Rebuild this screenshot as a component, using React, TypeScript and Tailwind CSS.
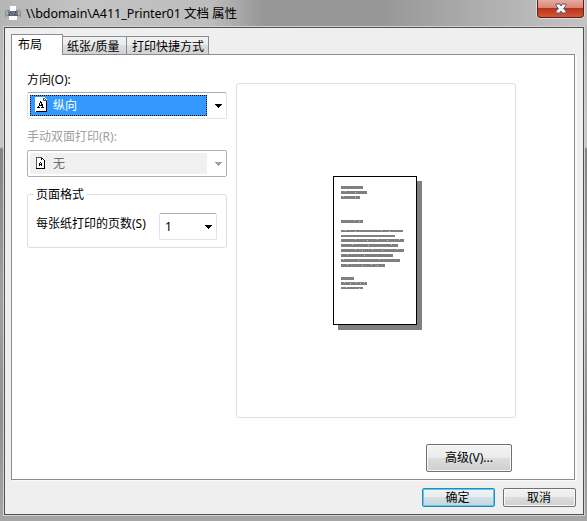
import type { ReactNode } from "react";

const previewLines = [
  { w: 22, h: 3, gap: 2, specks: [] },
  { w: 26, h: 3, gap: 2, specks: [4, 14] },
  { w: 19, h: 3, gap: 21, specks: [2, 14] },
  { w: 22, h: 3, gap: 7, specks: [13, 18] },
  { w: 62, h: 2, gap: 3, specks: [4, 14, 40, 48] },
  { w: 54, h: 2, gap: 2, specks: [] },
  { w: 63, h: 3, gap: 2, specks: [14, 26, 36, 46, 58] },
  { w: 57, h: 3, gap: 2, specks: [11, 27, 50] },
  { w: 63, h: 3, gap: 2, specks: [14, 21, 31, 41, 56] },
  { w: 52, h: 3, gap: 2, specks: [6, 23] },
  { w: 59, h: 3, gap: 2, specks: [2, 17, 38] },
  { w: 44, h: 3, gap: 10, specks: [6, 21, 30, 36] },
  { w: 13, h: 3, gap: 2, specks: [] },
  { w: 26, h: 3, gap: 2, specks: [3, 9, 15, 19, 23] },
  { w: 22, h: 2, gap: 0, specks: [5, 18] },
];

const PrinterIcon = () => (
  <svg width="16" height="15" viewBox="0 0 16 15" shapeRendering="crispEdges" className="shrink-0">
    <path d="M5 0h6v5H5z" fill="#fff" />
    <path d="M1 4h14v1H1zM0 5h16v6H0z" fill="#8b8f91" />
    <path d="M5 4h6v1H5z" fill="#fff" />
    <path d="M1 5h2v4H1zM13 5h2v4h-2z" fill="#a9adae" />
    <path d="M3 5h10v4H3z" fill="#74797c" />
    <path d="M3 5h2v1H3zM8 6h2v1H8zM6 8h1v1H6zM11 7h1v1h-1z" fill="#20a09b" />
    <path d="M5 6h1v1H5zM10 5h1v2h-1zM4 8h1v1H4zM9 8h1v1H9z" fill="#2945a0" />
    <path d="M6 7h2v1H6zM10 8h2v1h-2zM7 5h1v1H7z" fill="#a33c86" />
    <path d="M1 10h14v2H1z" fill="#b3b6b7" />
    <path d="M4 10h8v4H4z" fill="#fafafa" />
    <path d="M3 9h10v1H3z" fill="#666" />
  </svg>
);

const PageIcon = () => (
  <svg width="12" height="15" viewBox="0 0 12 15" shapeRendering="crispEdges" className="shrink-0">
    <path d="M0 0h9l3 3v12H0z" fill="#fff" />
    <path d="M11 4h1v11H1v-1h10z" fill="#000" />
    <path d="M8 1h1v2h3v1H8zM9 1h1v1H9zM10 2h1v1h-1z" fill="#555" />
    <path d="M5 4h1v1H5zM5 5h2v1H5zM4 6h1v2H4zM6 6h1v2H6zM7 7h1v2H7zM4 8h3v1H4zM3 9h1v1H3zM7 9h1v1H7zM2 10h3v1H2zM6 10h3v1H6z" fill="#000" />
  </svg>
);

const SmallPageIcon = () => (
  <svg width="9" height="12" viewBox="0 0 9 12" shapeRendering="crispEdges" className="shrink-0">
    <path d="M0 0h6l3 3v9H0z" fill="#fff" />
    <path d="M0 0h6v1H0zM0 0h1v12H0z" fill="#555" />
    <path d="M0 11h9v1H0zM8 3h1v9H8zM6 1h1v1H6zM7 2h1v1H7zM5 1h1v2H5z" fill="#000" />
    <path d="M4 5h1v1H4zM3 6h1v3H3zM5 6h1v3H5zM4 7h1v1H4z" fill="#000" />
  </svg>
);

const Arrow = ({ color }: { color: string }) => (
  <svg width="7" height="4" viewBox="0 0 7 4" shapeRendering="crispEdges" className="shrink-0">
    <path d="M0 0h7v1H0zM1 1h5v1H1zM2 2h3v1H2zM3 3h1v1H3z" fill={color} />
  </svg>
);

const Button = ({ children, className }: { children: ReactNode; className: string }) => (
  <button className={"flex items-center justify-center rounded-[2px] border text-xs leading-none " + className}>
    {children}
  </button>
);

export default function App() {
  return (
    <div className="flex h-[521px] w-[587px] flex-col overflow-hidden bg-[linear-gradient(#b4b4b4_0px,#c8c8c8_147px,#858585_149px,#a0a0a0_300px,#909090_420px,#a6a6a6_521px)] font-['Noto_Sans','Noto_Sans_CJK_SC',sans-serif] text-xs text-black">
      {/* title bar */}
      <div className="flex h-[26px] shrink-0 justify-between bg-[linear-gradient(90deg,#b5b5b5_0%,#c4c4c4_15%,#bcbcbc_36%,#969696_45%,#979797_65%,#aeaeae_82%,#c4c4c4_100%)] pl-[5px]">
        <div className="flex items-start gap-[5px] pt-[6px]">
          <PrinterIcon />
          <span className="text-[12.5px] leading-4 tracking-[-0.06px] whitespace-pre">{"\\\\bdomain\\A411_Printer01 文档 属性"}</span>
        </div>
        <button className="mr-[3px] flex h-[18px] w-[47px] items-center justify-center rounded-b-[4px] border border-t-0 border-[#5b2020] bg-[linear-gradient(#e8aaa0_0%,#d98477_48%,#bd3217_50%,#d2573c_100%)] shadow-[0_0_0_1px_#ddd]">
          <svg width="12" height="11" viewBox="0 0 12 11">
            <path d="M1 1h4l1 2 1-2h4v2L8.5 5.500 11 8v2H7L6 8l-1 2H1V8l2.500-2.500L1 3z" fill="#f4f4f4" stroke="#555a72" />
          </svg>
        </button>
      </div>

      {/* dialog body */}
      <div className="mt-px mr-[3px] ml-[4px] flex h-[488px] shrink-0 flex-col border border-[#505050] bg-[#efefef] px-[6px] pt-[6px] shadow-[0_0_0_1px_#d4d4d4]">
        <div className="z-10 flex h-5 shrink-0 items-end">
          <div className="-mb-px flex h-[21px] w-[52px] items-center border border-b-0 border-[#898c95] bg-white pl-[6px] leading-none">布局</div>
          <div className="flex h-[18px] w-[64px] items-center border border-b-0 border-l-0 border-[#898c95] bg-[linear-gradient(#f2f2f2_0%,#ebebeb_49%,#dddddd_50%,#d2d2d2_100%)] pt-[2px] pl-[4px] leading-none whitespace-nowrap">纸张/质量</div>
          <div className="flex h-[18px] w-[82px] items-center border border-b-0 border-l-0 border-[#898c95] bg-[linear-gradient(#f2f2f2_0%,#ebebeb_49%,#dddddd_50%,#d2d2d2_100%)] pt-[2px] pl-[5px] leading-none whitespace-nowrap">打印快捷方式</div>
        </div>

        <div className="flex h-[426px] w-[564px] shrink-0 flex-col border border-[#898c95] bg-white pt-[28px] pl-[15px] shadow-[2px_1px_0_#fafafa]">
          <div className="flex gap-[9px]">
            <div className="flex w-[200px] flex-col">
              <div className="-mt-[11px] h-5 leading-4">方向(O):</div>
              <div className="flex h-[27px] items-center rounded-[2px] border border-[#dfe4ec] border-t-[#abadb3] pl-[2px]">
                <div className="flex h-[21px] w-[177px] items-center border border-dotted border-[#17120d] bg-[#3399ff] pl-[4px] leading-none text-white">
                  <div className="-mt-[3px] mr-[6px]"><PageIcon /></div>
                  <span className="mt-px">纵向</span>
                </div>
                <div className="ml-[8px]"><Arrow color="#000" /></div>
              </div>

              <div className="mt-[10px] h-[21px] leading-4 text-[#a0a0a0]">手动双面打印(R):</div>
              <div className="flex h-[27px] items-center rounded-[2px] border border-[#afafaf] pl-[2px]">
                <div className="flex h-[21px] w-[177px] items-center bg-[#f0f0f0] pl-[6px] leading-none text-[#6d6d6d]">
                  <div className="mt-[-2px] mr-[8px]"><SmallPageIcon /></div>
                  无
                </div>
                <div className="ml-[8px]"><Arrow color="#a0a0a0" /></div>
              </div>

              <fieldset className="mt-[9px] h-[62px] rounded-[3px] border border-[#d5dfe5] pl-2">
                <legend className="-ml-[2px] h-4 px-[2px] leading-[18px]">页面格式</legend>
                <div className="mt-[11px] flex h-[27px] items-center">
                  <span className="mt-[-5px] w-[123px] whitespace-nowrap">每张纸打印的页数(S)</span>
                  <div className="flex h-[27px] w-[58px] items-center justify-between rounded-[2px] border border-[#dfe4ec] border-t-[#abadb3] pr-[4px] pl-[5px]">
                    1<Arrow color="#000" />
                  </div>
                </div>
              </fieldset>
            </div>

            <div className="flex h-[335px] w-[280px] justify-center rounded-[3px] border border-[#d5dfe5] pt-[92px]">
              <div className="mr-[2px] flex h-[149px] w-[84px] flex-col border border-black bg-white pt-[9px] pl-[7px] shadow-[5px_5px_0_#808080]">
                {previewLines.map((line, i) => (
                  <svg
                    key={i}
                    width={line.w}
                    height={line.h}
                    shapeRendering="crispEdges"
                    className="shrink-0 bg-[#808080]"
                    style={{ marginBottom: line.gap }}
                  >
                    {line.specks.map((x, n) => (
                      <rect key={x} x={x} y={n % 2} width="1" height="1" fill="#c8c8c8" />
                    ))}
                  </svg>
                ))}
              </div>
            </div>
          </div>
          <Button className="mt-[26px] ml-[399px] h-[28px] w-[86px] border-[#707070] bg-[linear-gradient(#f3f3f3_0%,#ebebeb_49%,#dddddd_50%,#cfcfcf_100%)] shadow-[inset_0_0_0_1px_#f8f8f8]">高级(V)...</Button>
        </div>

        <div className="mt-[8px] flex justify-end gap-[8px] pr-px">
          <Button className="h-[19px] w-[73px] border-[#3c7fb1] bg-[linear-gradient(#f0f4f6_0%,#e6edf0_49%,#d5dfe4_50%,#c8d4da_100%)] pr-[2px] shadow-[inset_0_0_0_1px_#48d0f5]">确定</Button>
          <Button className="h-[19px] w-[73px] border-[#707070] bg-[linear-gradient(#f3f3f3_0%,#ebebeb_49%,#dddddd_50%,#cfcfcf_100%)] pr-px shadow-[inset_0_0_0_1px_#f8f8f8]">取消</Button>
        </div>
      </div>
    </div>
  );
}
